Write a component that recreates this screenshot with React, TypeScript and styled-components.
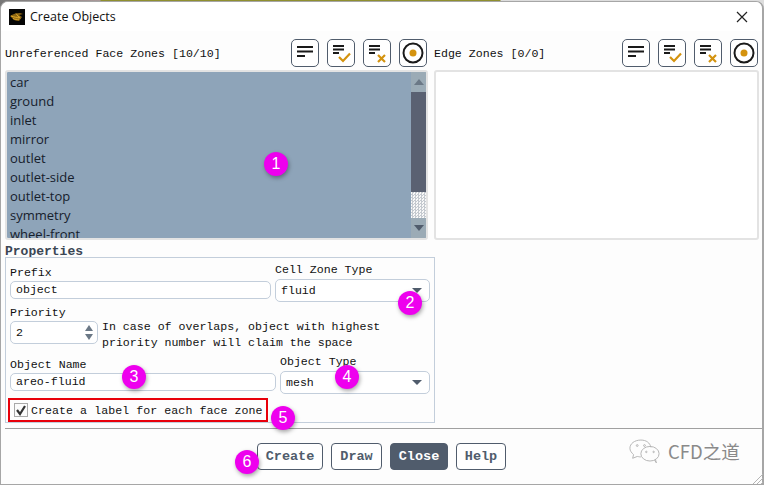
import React from 'react'
import styled, { createGlobalStyle } from 'styled-components'

const MONO = `"Liberation Mono", "DejaVu Sans Mono", monospace`
const SANS = `"Open Sans", "Noto Sans", sans-serif`
const SLATE = '#505c6c'
const FIELD_BORDER = '#c3cedb'
const ZONES = ['car', 'ground', 'inlet', 'mirror', 'outlet', 'outlet-side', 'outlet-top', 'symmetry', 'wheel-front']

const Global = createGlobalStyle`
  html, body { margin: 0; padding: 0; background: #fff; }
  * { box-sizing: border-box; }
`

const Desktop = styled.div`
  position: relative;
  width: 764px;
  height: 485px;
  overflow: hidden;
  background: linear-gradient(90deg, #777 0, #a99 100px, #8f8f2e 101px, #8f8f2e 500px, #ddd 501px);
`

const Window = styled.div`
  width: 764px;
  height: 484px;
  margin-top: 1px;
  display: flex;
  flex-direction: column;
  background: #fdfdfd;
  border: 1px solid #a6a6a6;
  border-right-width: 2px;
  border-radius: 8px 8px 0 0;
  overflow: hidden;
`

const TitleBar = styled.div`
  height: 29px;
  flex: none;
  display: flex;
  align-items: center;
  padding: 0 14px 0 8px;
  gap: 5px;
  background: #fff;
`

const Title = styled.span`
  flex: 1;
  font: 12.5px ${SANS};
  color: #111;
`

const Columns = styled.div`
  display: flex;
  padding: 8px 0 0 4px;
  height: 397px;
  flex: none;
`

const LeftColumn = styled.div`
  width: 429px;
  flex: none;
  display: flex;
  flex-direction: column;
`

const RightColumn = styled.div`
  width: 325px;
  flex: none;
  display: flex;
  flex-direction: column;
`

const ListHeader = styled.div`
  height: 28px;
  flex: none;
  display: flex;
  align-items: center;
  justify-content: space-between;
  padding-right: 1px;
`

const LeftHeader = styled(ListHeader)`
  width: 423px;
`

const MonoLabel = styled.span`
  font: 11.6px ${MONO};
  color: #111;
  white-space: nowrap;
`

const CheckLabel = styled(MonoLabel)`
  letter-spacing: 0.06px;
`

const ToolGroup = styled.div`
  display: flex;
  gap: 8px;
`

const ToolButton = styled.div`
  width: 28px;
  height: 28px;
  border: 1px solid ${SLATE};
  border-radius: 5px;
  background: #fff;
`

const ListFrame = styled.div`
  height: 170px;
  flex: none;
  margin-top: 3px;
  border: 2px solid #e3e3e3;
  border-radius: 3px;
  background: #fff;
  display: flex;
  overflow: hidden;
`

const LeftList = styled(ListFrame)`
  width: 423px;
`

const RightList = styled(ListFrame)`
  width: 325px;
`

const ZoneList = styled.ul`
  flex: 1;
  margin: 0;
  padding: 1px 0 0 3px;
  list-style: none;
  background: #8ea4b9;
  overflow: hidden;
`

const ZoneItem = styled.li`
  height: 19px;
  font: 13px/19px ${SANS};
  color: #16202c;
`

const ScrollBar = styled.div`
  width: 15px;
  flex: none;
  display: flex;
  flex-direction: column;
  background: #8ea4b9;
`

const ScrollArrow = styled.div<{ $down?: boolean }>`
  height: 20px;
  flex: none;
  display: flex;
  align-items: center;
  justify-content: center;
  background: #9babb6;
  &::after {
    content: '';
    border-left: 5px solid transparent;
    border-right: 5px solid transparent;
    ${(p) => (p.$down ? `border-top: 6px solid ${SLATE};` : `border-bottom: 6px solid #6b7886;`)}
  }
`

const ScrollThumb = styled.div`
  height: 100px;
  flex: none;
  background: #5a6172;
`

const ScrollTrack = styled.div`
  flex: 1;
  background: repeating-conic-gradient(#c4c9cf 0 25%, #f8f8f8 0 50%) 0 0 / 3px 3px;
`

const SectionTitle = styled.div`
  height: 17px;
  flex: none;
  padding-top: 5px;
  font: bold 13px/13px ${MONO};
  color: #3b4654;
`

const Panel = styled.div`
  width: 430px;
  height: 166px;
  flex: none;
  border: 1px solid ${FIELD_BORDER};
  padding: 4px 4px 0 2px;
  display: flex;
  flex-direction: column;
`

const TwoFields = styled.div<{ $left: number; $height: number; $top?: number }>`
  display: grid;
  grid-template-columns: ${(p) => p.$left}px 1fr;
  column-gap: 4px;
  align-items: center;
  flex: none;
  height: ${(p) => p.$height}px;
  padding: ${(p) => p.$top || 0}px 0 0 2px;
`

const Field = styled.label`
  display: flex;
  flex-direction: column;
  gap: 2px;
`

const TextBox = styled.div`
  height: 18px;
  border: 1px solid ${FIELD_BORDER};
  border-radius: 5px;
  padding: 0 5px;
  font: 11.6px/16px ${MONO};
  color: #111;
  background: #fff;
`

const SelectBox = styled.div`
  height: 23px;
  margin-top: 1px;
  display: flex;
  align-items: center;
  justify-content: space-between;
  border: 1px solid ${FIELD_BORDER};
  border-radius: 5px;
  padding: 0 7px 0 5px;
  font: 11.6px ${MONO};
  color: #111;
  background: #fff;
  &::after {
    content: '';
    border-left: 5px solid transparent;
    border-right: 5px solid transparent;
    border-top: 5px solid ${SLATE};
  }
`

const PriorityRow = styled.div`
  display: flex;
  flex: none;
  align-items: flex-end;
  gap: 4px;
  height: 41px;
  padding: 2px 0 0 2px;
`

const Spinner = styled.div`
  width: 88px;
  height: 23px;
  display: flex;
  align-items: center;
  justify-content: space-between;
  border: 1px solid ${FIELD_BORDER};
  border-radius: 5px;
  padding: 0 4px 0 5px;
  font: 11.6px ${MONO};
  color: #111;
  background: #fff;
`

const SpinArrows = styled.div`
  display: flex;
  flex-direction: column;
  gap: 3px;
  &::before,
  &::after {
    content: '';
    border-left: 4.5px solid transparent;
    border-right: 4.5px solid transparent;
  }
  &::before { border-bottom: 6px solid #6b7886; }
  &::after { border-top: 6px solid #6b7886; }
`

const Note = styled.div`
  font: 11.6px/16px ${MONO};
  color: #111;
  white-space: nowrap;
  margin-bottom: -7px;
`

const CheckRow = styled.div`
  width: 260px;
  height: 24px;
  flex: none;
  margin-top: 2px;
  border: 2px solid #e8000b;
  display: flex;
  align-items: center;
  gap: 3px;
  padding-left: 4px;
`

const CheckBox = styled.div`
  width: 14px;
  height: 14px;
  flex: none;
  border: 1px solid #a9a9a9;
  background: #fbfbfb;
  display: flex;
  align-items: center;
  justify-content: center;
`

const Divider = styled.div`
  height: 1px;
  flex: none;
  margin: 0 0 0 4px;
  background: #a0a0a0;
`

const ActionBar = styled.div`
  flex: 1;
  display: flex;
  gap: 8px;
  padding: 14px 0 0 256px;
`

const ActionButton = styled.div<{ $width: number; $primary?: boolean }>`
  width: ${(p) => p.$width}px;
  height: 27px;
  display: flex;
  align-items: center;
  justify-content: center;
  border: 1px solid ${SLATE};
  border-radius: 4px;
  font: bold 13.5px ${MONO};
  color: ${(p) => (p.$primary ? '#fff' : SLATE)};
  background: ${(p) => (p.$primary ? SLATE : '#fff')};
`

const Badge = styled.div<{ $x: number; $y: number }>`
  position: absolute;
  left: ${(p) => p.$x - 12}px;
  top: ${(p) => p.$y - 12}px;
  width: 24px;
  height: 24px;
  border-radius: 50%;
  background: #ee00ee;
  box-shadow: 1px 2px 4px rgba(0, 0, 0, 0.35);
  color: #fff;
  font: 16px/24px "Liberation Sans", sans-serif;
  text-align: center;
`

const Watermark = styled.div`
  position: absolute;
  left: 629px;
  top: 438px;
  display: flex;
  align-items: center;
  gap: 8px;
  color: #8a8a8a;
  font: 18.5px "Noto Sans CJK SC", sans-serif;
`

const Grip = styled.svg`
  position: absolute;
  right: 1px;
  bottom: 1px;
`

const Logo = () => (
  <svg width="16" height="16" viewBox="0 0 16 16">
    <rect width="16" height="16" fill="#050505" />
    <path d="M1 7c3-2 6-3 10-3l3 1-4 1 3 2-3 4c-3 0-6-1-7-3z" fill="#8a6412" />
    <path d="M2 7c3 1 6 2 9 1M4 9.500c2 1 4 1 6 .5M7 4.500l4 5" stroke="#e0a92c" strokeWidth="1" fill="none" />
  </svg>
)

const CloseGlyph = () => (
  <svg width="12" height="12" viewBox="0 0 12 12">
    <path d="M1 1l10 10M11 1L1 11" stroke="#222" strokeWidth="1.2" />
  </svg>
)

const ListIcon = ({ mark }: { mark?: 'check' | 'cross' }) => (
  <svg width="26" height="26" viewBox="0 0 26 26">
    {mark ? (
      <>
        <path d="M5 6h11M5 9.500h11M5 13h6" stroke="#1a1a1a" strokeWidth="2" />
        {mark === 'check' && <path d="M11 17l4 4 7-7.500" stroke="#d4930f" strokeWidth="2.2" fill="none" />}
        {mark === 'cross' && <path d="M14 15l7 7M21 15l-7 7" stroke="#d4930f" strokeWidth="2.2" fill="none" />}
      </>
    ) : (
      <path d="M5 7h16M5 11.500h16M5 16h8" stroke="#1a1a1a" strokeWidth="2" />
    )}
  </svg>
)

const TargetIcon = () => (
  <svg width="26" height="26" viewBox="0 0 26 26">
    <circle cx="13" cy="13" r="9.500" fill="none" stroke="#1a1a1a" strokeWidth="2" />
    <circle cx="13" cy="13" r="3.500" fill="#d4930f" />
  </svg>
)

const Tools = () => (
  <ToolGroup>
    <ToolButton><ListIcon /></ToolButton>
    <ToolButton><ListIcon mark="check" /></ToolButton>
    <ToolButton><ListIcon mark="cross" /></ToolButton>
    <ToolButton><TargetIcon /></ToolButton>
  </ToolGroup>
)

const WeChat = () => (
  <svg width="31" height="24" viewBox="0 0 34 26" fill="none" stroke="#b0b0b0" strokeWidth="1">
    <path d="M13 1C6 1 1 5 1 10c0 3 2 5 4 7l-1 4 5-2c1 0 2 .5 4 .5" />
    <path d="M13 1c6 0 10 3 11 8" />
    <ellipse cx="23" cy="16" rx="10" ry="8" />
    <path d="M28 23l2 3-1-4" />
    <circle cx="9" cy="7" r="1" />
    <circle cx="17" cy="7" r="1" />
    <circle cx="19" cy="14" r=".8" />
    <circle cx="27" cy="14" r=".8" />
  </svg>
)

export default function App() {
  return (
    <>
      <Global />
      <Desktop>
        <Window>
          <TitleBar>
            <Logo />
            <Title>Create Objects</Title>
            <CloseGlyph />
          </TitleBar>
          <Columns>
            <LeftColumn>
              <LeftHeader>
                <MonoLabel>Unreferenced Face Zones [10/10]</MonoLabel>
                <Tools />
              </LeftHeader>
              <LeftList>
                <ZoneList>
                  {ZONES.map((z) => (
                    <ZoneItem key={z}>{z}</ZoneItem>
                  ))}
                </ZoneList>
                <ScrollBar>
                  <ScrollArrow />
                  <ScrollThumb />
                  <ScrollTrack />
                  <ScrollArrow $down />
                </ScrollBar>
              </LeftList>
              <SectionTitle>Properties</SectionTitle>
              <Panel>
                <TwoFields $left={261} $height={41}>
                  <Field>
                    <MonoLabel>Prefix</MonoLabel>
                    <TextBox>object</TextBox>
                  </Field>
                  <Field>
                    <MonoLabel>Cell Zone Type</MonoLabel>
                    <SelectBox>fluid</SelectBox>
                  </Field>
                </TwoFields>
                <PriorityRow>
                  <Field>
                    <MonoLabel>Priority</MonoLabel>
                    <Spinner>
                      2
                      <SpinArrows />
                    </Spinner>
                  </Field>
                  <Note>
                    In case of overlaps, object with highest
                    <br />
                    priority number will claim the space
                  </Note>
                </PriorityRow>
                <TwoFields $left={266} $height={52} $top={9}>
                  <Field>
                    <MonoLabel>Object Name</MonoLabel>
                    <TextBox>areo-fluid</TextBox>
                  </Field>
                  <Field>
                    <MonoLabel>Object Type</MonoLabel>
                    <SelectBox>mesh</SelectBox>
                  </Field>
                </TwoFields>
                <CheckRow>
                  <CheckBox>
                    <svg width="12" height="12" viewBox="0 0 12 12">
                      <path d="M2 6l3 4 5-8" stroke="#333" strokeWidth="2.2" fill="none" />
                    </svg>
                  </CheckBox>
                  <CheckLabel>Create a label for each face zone</CheckLabel>
                </CheckRow>
              </Panel>
            </LeftColumn>
            <RightColumn>
              <ListHeader>
                <MonoLabel>Edge Zones [0/0]</MonoLabel>
                <Tools />
              </ListHeader>
              <RightList />
            </RightColumn>
          </Columns>
          <Divider />
          <ActionBar>
            <ActionButton $width={66}>Create</ActionButton>
            <ActionButton $width={51}>Draw</ActionButton>
            <ActionButton $width={58} $primary>Close</ActionButton>
            <ActionButton $width={50}>Help</ActionButton>
          </ActionBar>
        </Window>
        <Badge $x={276} $y={164}>1</Badge>
        <Badge $x={410} $y={303}>2</Badge>
        <Badge $x={134} $y={377}>3</Badge>
        <Badge $x={347} $y={377}>4</Badge>
        <Badge $x={283} $y={418}>5</Badge>
        <Badge $x={247} $y={462}>6</Badge>
        <Watermark>
          <WeChat />
          CFD之道
        </Watermark>
        <Grip width="12" height="12" viewBox="0 0 12 12">
          <path d="M12 2L2 12M12 6l-6 6M12 10l-2 2" stroke="#b5b5b5" />
        </Grip>
      </Desktop>
    </>
  )
}
